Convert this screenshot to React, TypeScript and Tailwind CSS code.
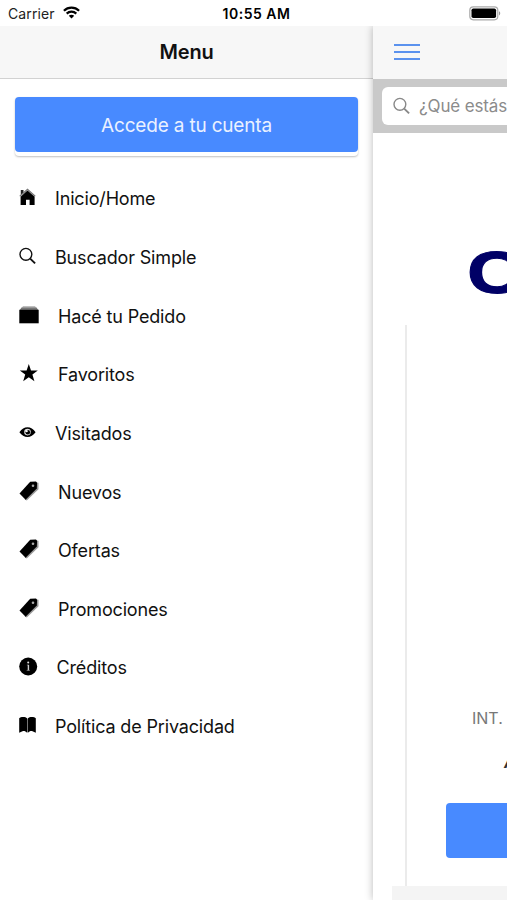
import type { ReactNode } from 'react';

interface MenuItem {
  label: string;
  icon: ReactNode;
}

const HomeIcon = () => (
  <svg width="17" height="18" viewBox="0 0 17 18" className="shrink-0">
    <path d="M1.8 2h2.7v3.2L1.8 7.3z" fill="#222" />
    <path d="M.8 8.2 8.5 1.4l7.7 6.8" fill="none" stroke="#777" strokeWidth="1.2" />
    <path d="M8.5 2.6 15.6 8.8V17h-5V11.8H7V17H1.600V8.800z" fill="#000" />
  </svg>
);

const SearchIcon = ({ color = '#111' }: { color?: string }) => (
  <svg width="17" height="18" viewBox="0 0 17 18" className="shrink-0" fill="none" stroke={color}>
    <circle cx="6.9" cy="7.3" r="5.9" strokeWidth="1.4" />
    <path d="m11.2 11.6 4.9 4.8" strokeWidth="1.9" />
  </svg>
);

const AlbumsIcon = () => (
  <svg width="20" height="18" viewBox="0 0 20 18" className="shrink-0">
    <path d="M4 .2h12l1.3 1.5H2.7z" fill="#aaa" />
    <path d="M2.5 1.5h15L19.3 4H.7z" fill="#777" />
    <path d="M.3 3.8h19.4v13.5H.3z" fill="#000" />
  </svg>
);

const StarIcon = () => (
  <svg width="20" height="18" viewBox="0 0 20 18" className="shrink-0">
    <path d="m9.8 0 2.2 6.5h6.8l-5.4 4 2 6.7-5.6-4-5.6 4 2-6.7-5.4-4h6.800z" fill="#000" />
  </svg>
);

const EyeIcon = () => (
  <svg width="17" height="18" viewBox="0 0 17 18" className="shrink-0">
    <path d="M.4 9.2C2.7 6 5.4 4.2 8.5 4.2s5.800 1.800 8.100 5c-2.300 3-5 4.800-8.100 4.800s-5.800-1.800-8.100-4.800z" fill="#000" />
    <circle cx="8.500" cy="9.100" r="3.300" fill="#ddd" />
    <circle cx="8.800" cy="9.300" r="2.300" fill="#000" />
    <circle cx="7.700" cy="8.200" r="1.100" fill="#fff" />
  </svg>
);

const TagIcon = () => (
  <svg width="20" height="20" viewBox="0 0 20 20" className="shrink-0">
    <path d="m12 1.5 7.5.3v6.4L7.8 19.6l-2-1z" fill="#999" />
    <path d="M11.2.7 17 .5l1.100 1.200-.3 5.800L6.600 18.700.5 12.500z" fill="#000" />
    <circle cx="14" cy="4.700" r="1.300" fill="#aaa" />
  </svg>
);

const InfoIcon = () => (
  <svg width="18.5" height="19" viewBox="0 0 18.5 19" className="shrink-0">
    <circle cx="9.2" cy="9.5" r="9" fill="#000" />
    <circle cx="9.2" cy="5.6" r="1" fill="#ddd" />
    <path d="M9.4 7.8v5.500" stroke="#ccc" strokeWidth="1.4" />
    <path d="M7.900 8.100h1.200M7.700 13.400h3.200" stroke="#999" strokeWidth=".7" />
  </svg>
);

const BookIcon = () => (
  <svg width="17" height="18" viewBox="0 0 17 18" className="shrink-0">
    <path d="M.2 2.200C1.500.7 6.500.4 8 2.200v14.600c-1.200-1.600-3.200-2-4.500-1.500L.2 16.800zM16.800 2.200C15.500.7 10.500.4 9 2.200v14.600c1.200-1.600 3.200-2 4.500-1.500l3.300 1.500z" fill="#000" />
    <path d="M8.500 2.500v14" stroke="#777" />
  </svg>
);

const items: MenuItem[] = [
  { label: 'Inicio/Home', icon: <HomeIcon /> },
  { label: 'Buscador Simple', icon: <SearchIcon /> },
  { label: 'Hacé tu Pedido', icon: <AlbumsIcon /> },
  { label: 'Favoritos', icon: <StarIcon /> },
  { label: 'Visitados', icon: <EyeIcon /> },
  { label: 'Nuevos', icon: <TagIcon /> },
  { label: 'Ofertas', icon: <TagIcon /> },
  { label: 'Promociones', icon: <TagIcon /> },
  { label: 'Créditos', icon: <InfoIcon /> },
  { label: 'Política de Privacidad', icon: <BookIcon /> },
];

function StatusBar() {
  return (
    <div className="grid h-[26px] shrink-0 grid-cols-3 items-center text-[14px] text-[#222]">
      <div className="flex items-center gap-2 pl-2">
        <span className="tracking-[0.1px]">Carrier</span>
        <svg width="17" height="13" viewBox="0 0 17 13" className="-mt-px" fill="none" stroke="#000" strokeWidth="2.2">
          <path d="M.9 4.8c4.300-4.200 10.900-4.200 15.200 0M3.700 7.600c2.700-2.600 6.900-2.600 9.600 0" />
          <path d="m8.500 12.500-2.700-2.800c1.500-1.400 3.900-1.400 5.400 0z" fill="#000" stroke="none" />
        </svg>
      </div>
      <div className="text-center font-semibold tracking-[0.5px] whitespace-nowrap text-black">
        <span className="ml-1.5">10:55 AM</span>
      </div>
      <div className="flex justify-end pr-1.5">
        <svg width="32" height="15" viewBox="0 0 32 15">
          <rect x=".8" y=".8" width="28" height="13" rx="3.5" fill="#fff" stroke="#aaa" strokeWidth="1.2" />
          <rect x="2.5" y="2.5" width="24.6" height="9.6" rx="1.8" fill="#000" />
          <path d="M30 5.200c1.700.7 1.700 3.500 0 4.200z" fill="#999" />
        </svg>
      </div>
    </div>
  );
}

function SideMenu() {
  return (
    <aside className="flex w-[373px] shrink-0 flex-col bg-white">
      <header className="flex h-[53px] items-center justify-center border-b border-[#d2d2d2] bg-[#f7f7f7] text-[20px] font-semibold tracking-[-0.2px] text-[#111]">
        Menu
      </header>
      <div className="mx-[15px] mt-[18px] rounded-[4px] pb-1 shadow-[0_1px_2px_rgba(0,0,0,0.25)]">
        <button className="block h-[55px] w-full rounded-[4px] bg-[#488aff] pt-[3px] text-[19px] tracking-[-0.18px] text-[#eaf1ff]">
          Accede a tu cuenta
        </button>
      </div>
      <nav className="mt-[13.4px]">
        {items.map((item) => (
          <a key={item.label} className="flex h-[58.67px] items-center gap-[19px] pl-[19px]">
            <span className="-mt-[3px]">{item.icon}</span>
            <span className="text-[18px] tracking-[-0.16px] whitespace-nowrap text-[#111]">{item.label}</span>
          </a>
        ))}
      </nav>
    </aside>
  );
}

function Content() {
  return (
    <main className="relative flex w-[134px] shrink-0 flex-col bg-white shadow-[0_0_8px_rgba(0,0,0,0.28)]">
      <header className="flex h-[53px] shrink-0 items-center bg-[#f7f7f7] pb-[2px] pl-[21px]">
        <svg width="26" height="16" viewBox="0 0 26 16" stroke="#5b92ee" strokeWidth="2">
          <path d="M0 1h26M0 8h26M0 15h26" />
        </svg>
      </header>
      <div className="h-[54px] shrink-0 overflow-hidden bg-[#c9c9c9] py-2 pl-[9px]">
        <div className="flex h-[38px] w-[300px] items-center gap-[9px] rounded-[6px] bg-white pl-[11px]">
          <SearchIcon color="#888" />
          <span className="pt-[2px] text-[17px] tracking-[-0.15px] whitespace-nowrap text-[#8b8b8b]">¿Qué estás</span>
        </div>
      </div>
      <div className="flex h-[192px] shrink-0 items-start overflow-hidden pt-[110px] pl-[94px]">
        <span className="origin-left scale-x-130 font-['Liberation_Sans'] text-[60px] leading-[60px] font-bold text-[#000066] [-webkit-text-stroke:1px_#000066]">
          C
        </span>
      </div>
      <div className="ml-8 flex h-[561px] shrink-0 flex-col overflow-hidden border-l-2 border-[#ebebeb] pt-[383px] pl-[39px] whitespace-nowrap">
        <div className="pl-[26px] text-[16px] leading-5 text-[#777]">INT.</div>
        <div className="mt-6 pl-[58px] text-[16px] leading-5 font-bold text-[#333] italic">A</div>
        <div className="mt-[31px] h-[55px] w-[300px] shrink-0 rounded-[4px] bg-[#488aff]" />
      </div>
      <div className="ml-[19px] grow bg-[#f4f4f4]" />
    </main>
  );
}

export default function App() {
  return (
    <div className="flex h-[900px] w-[507px] flex-col overflow-hidden bg-white font-['Inter','Liberation_Sans',sans-serif]">
      <StatusBar />
      <div className="flex min-h-0 grow overflow-hidden">
        <SideMenu />
        <Content />
      </div>
    </div>
  );
}
